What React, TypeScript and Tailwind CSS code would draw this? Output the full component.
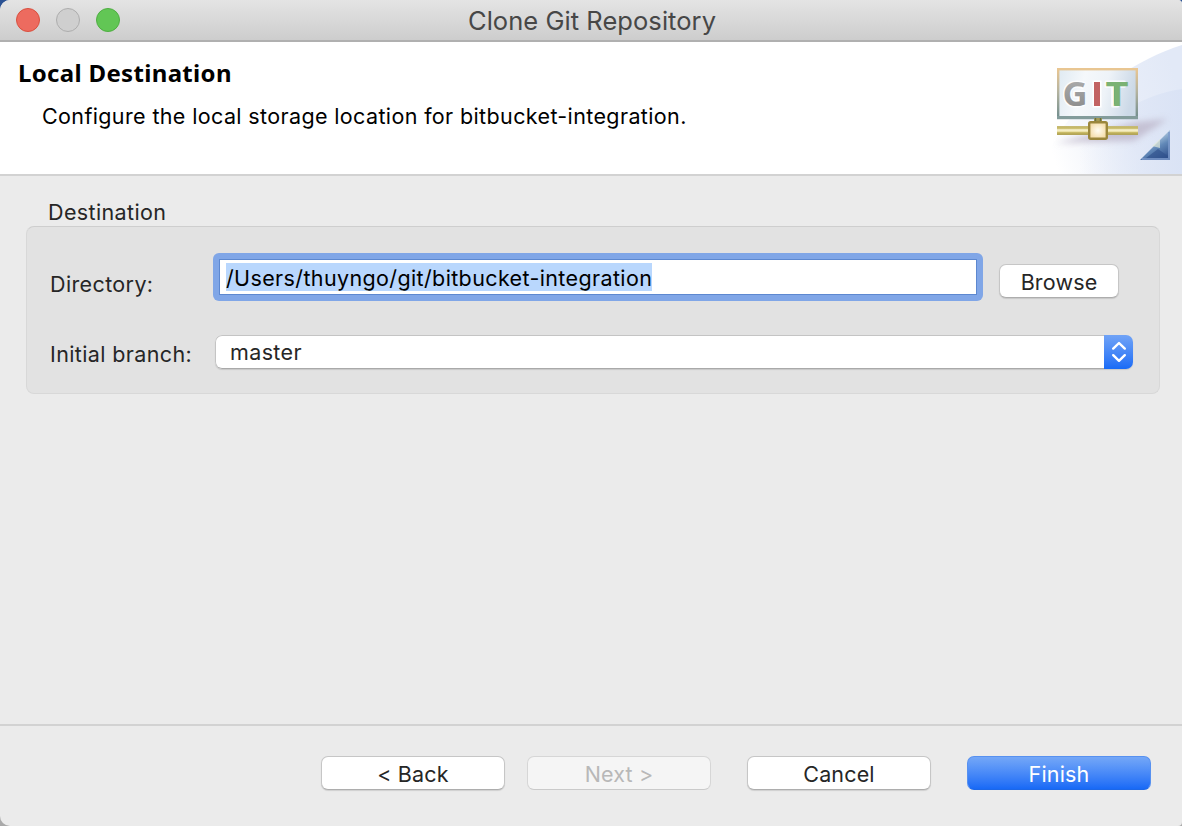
import type { ReactNode } from "react";

function TitleBar() {
  return (
    <header className="flex h-[42px] shrink-0 items-center justify-between border-b-2 border-[#b0b0b0] bg-linear-to-b from-[#e4e4e4] to-[#cdcdcd] px-4">
      <div className="flex w-[104px] gap-4">
        <span className="size-6 rounded-full border border-[#d8503f] bg-[#ed6b5f]" />
        <span className="size-6 rounded-full border border-[#adadad] bg-[#cfcfcf]" />
        <span className="size-6 rounded-full border border-[#4fae42] bg-[#62c655]" />
      </div>
      <h1 className="pt-[2px] pl-[2px] text-[25.5px] leading-none tracking-[0.05px] whitespace-nowrap text-[#474747]">Clone Git Repository</h1>
      <div className="w-[104px]" />
    </header>
  );
}

function GitBanner() {
  return (
    <svg className="h-[132px] w-[152px] shrink-0" viewBox="0 0 152 132" aria-hidden="true">
      <defs>
        <linearGradient id="sweep" x1="0" y1="0.7" x2="1" y2="0.4">
          <stop offset="0.05" stopColor="#e8edf8" stopOpacity="0" />
          <stop offset="0.6" stopColor="#e9eef9" />
          <stop offset="1" stopColor="#e2e9f7" />
        </linearGradient>
        <linearGradient id="sweepLow" x1="0" y1="0" x2="1" y2="0">
          <stop offset="0.15" stopColor="#dce4f5" stopOpacity="0" />
          <stop offset="1" stopColor="#dae3f5" />
        </linearGradient>
        <linearGradient id="frame" x1="0" y1="0" x2="0" y2="1">
          <stop offset="0" stopColor="#e9c692" />
          <stop offset="0.45" stopColor="#b6b4a0" />
          <stop offset="1" stopColor="#718d8d" />
        </linearGradient>
        <linearGradient id="screen" x1="0" y1="0" x2="1" y2="0.15">
          <stop offset="0" stopColor="#dfeaf2" />
          <stop offset="0.35" stopColor="#f5f8fb" />
          <stop offset="0.65" stopColor="#eef3f8" />
          <stop offset="1" stopColor="#ccd9e7" />
        </linearGradient>
        <linearGradient id="pipe" x1="0" y1="0" x2="0" y2="1">
          <stop offset="0" stopColor="#c5ba78" />
          <stop offset="0.25" stopColor="#c6b862" />
          <stop offset="0.42" stopColor="#f6f0cd" />
          <stop offset="0.58" stopColor="#f4ebb8" />
          <stop offset="0.75" stopColor="#c0b158" />
          <stop offset="1" stopColor="#aea158" />
        </linearGradient>
        <radialGradient id="node">
          <stop offset="0" stopColor="#fffdf3" />
          <stop offset="1" stopColor="#f5deac" />
        </radialGradient>
        <linearGradient id="corner" x1="0.2" y1="0" x2="0.75" y2="1">
          <stop offset="0.25" stopColor="#bdd5e7" />
          <stop offset="0.6" stopColor="#6289b8" />
          <stop offset="1" stopColor="#30518c" />
        </linearGradient>
        <linearGradient id="letterG" x1="0" y1="0" x2="0" y2="1">
          <stop offset="0" stopColor="#b5b5b5" />
          <stop offset="1" stopColor="#858585" />
        </linearGradient>
        <filter id="soft" x="-20%" y="-50%" width="140%" height="200%">
          <feGaussianBlur stdDeviation="3" />
        </filter>
      </defs>
      <path d="M152 3 C108 17 62 48 34 84 C24 100 14 116 8 132 H152Z" fill="url(#sweep)" />
      <path d="M152 47 C112 53 67 77 32 132 H152Z" fill="url(#sweepLow)" />
      <path d="M26 101 L106 80 L138 77 L104 99 Z" fill="#b9b1c5" opacity="0.7" filter="url(#soft)" />
      <rect x="28.2" y="27.2" width="78.6" height="48.8" fill="url(#screen)" stroke="url(#frame)" strokeWidth="2.4" />
      <path d="M27 75.4 H108" stroke="#839c9b" strokeWidth="3" />
      <g fontFamily="Noto Sans, sans-serif" fontWeight="700" fontSize="33.6">
        <g stroke="#fff" strokeWidth="3" strokeLinejoin="round" opacity="0.8">
          <text x="32.5" y="64">G</text>
          <text x="75.5" y="64">T</text>
        </g>
        <text x="32.5" y="64" textLength="25.5" lengthAdjust="spacingAndGlyphs" fill="url(#letterG)">G</text>
        <text x="75.5" y="64" textLength="23.5" lengthAdjust="spacingAndGlyphs" fill="#7bb273">T</text>
      </g>
      <rect x="62.5" y="38.5" width="9" height="27" fill="#fff" />
      <rect x="64" y="40" width="6" height="24" fill="#c26363" />
      <path d="M64 76 H72 V81 H64Z" fill="#a59b55" />
      <path d="M65.5 76 V80 M70.5 76 V80" stroke="#657046" strokeWidth="1.4" />
      <rect x="27" y="84" width="81" height="9" fill="url(#pipe)" />
      <rect x="59.2" y="80.2" width="17.6" height="16.6" rx="1.5" fill="url(#node)" stroke="#9b873c" strokeWidth="2.4" />
      <path d="M140 88 V118 H110 L124 104Z" fill="url(#corner)" />
      <path d="M116 116 L128 107 L138 114 V118 H111Z" fill="#30518c" opacity="0.65" />
      <path d="M122 104 L130 97 L130 106Z" fill="#e2e9d8" opacity="0.7" />
      <path d="M139 90 V117 H112" fill="none" stroke="#7d9bcc" strokeWidth="2" opacity="0.8" />
    </svg>
  );
}

function PushButton({ children, className }: { children: ReactNode; className: string }) {
  return (
    <button className={`flex h-[34px] shrink-0 items-center justify-center rounded-[7px] border pt-[4px] text-[21.5px] leading-none tracking-[0.15px] ${className}`}>
      {children}
    </button>
  );
}

const plain = "border-[#c6c6c6] border-b-[#adadad] bg-white text-[#262626] shadow-[0_1px_1px_rgba(0,0,0,0.12)]";

export default function App() {
  return (
    <div className="h-[826px] w-[1182px] bg-linear-to-b from-[#2b5293] from-10% to-[#a9a9a9] to-50%">
      <main className="flex h-full flex-col overflow-hidden rounded-tl-[10px] rounded-tr-[4px] rounded-br-[4px] rounded-bl-[10px] bg-[#ebebeb] font-['Inter',sans-serif] text-[21.5px] leading-[26px] tracking-[0.37px] text-[#262626]">
        <TitleBar />
        <section className="flex h-[134px] shrink-0 justify-between border-b-2 border-[#d2d2d2] bg-white text-black">
          <div className="pt-[14px] pl-[18px]">
            <h2 className="font-['Noto_Sans',sans-serif] text-[24px] leading-[34px] font-bold tracking-[0.33px] whitespace-nowrap">Local Destination</h2>
            <p className="mt-[13px] pl-6 whitespace-nowrap">Configure the local storage location for bitbucket-integration.</p>
          </div>
          <GitBanner />
        </section>
        <section className="flex-1 px-[26px] pr-[22px] pt-[23px]">
          <h3 className="h-[27px] pl-[22px]">Destination</h3>
          <div className="h-[168px] rounded-[8px] border border-[#d8d8d8] border-t-[#cecece] bg-[#e2e2e2] pt-[26px] pl-[23px]">
            <div className="flex h-[48px]">
              <label className="w-[163px] pt-[18px]">Directory:</label>
              <div className="h-[48px] w-[770px] rounded-[6px] bg-[#80a6e7] p-[6px]">
                <div className="flex h-full items-center border border-[#5d88d0] bg-white pl-[6px] text-black">
                  <span className="flex h-7 items-center bg-[#b9d7fd] pt-[2px] whitespace-nowrap">/Users/thuyngo/git/bitbucket-integration</span>
                </div>
              </div>
              <PushButton className={`mt-[11px] ml-4 w-[120px] ${plain}`}>Browse</PushButton>
            </div>
            <div className="mt-[34px] flex h-[34px]">
              <label className="w-[165px] shrink-0 pt-[6px] whitespace-nowrap">Initial branch:</label>
              <div className="flex h-[34px] w-[918px] overflow-hidden rounded-[7px] shadow-[0_1px_1px_rgba(0,0,0,0.12)]">
                <div className="flex flex-1 items-center rounded-l-[7px] border border-r-0 border-[#c4c4c4] border-b-[#a9a9a9] bg-white pl-[14px]">
                  master
                </div>
                <div className="flex w-[29px] items-center justify-center bg-linear-to-b from-[#70a3f6] to-[#186bf6]">
                  <svg width="16" height="22" viewBox="0 0 16 22" fill="none" stroke="white" strokeWidth="2.4" strokeLinecap="round" strokeLinejoin="round">
                    <path d="M2.2 7.6 L8 2 L13.8 7.6 M2.2 14.2 L8 19.8 L13.8 14.2" />
                  </svg>
                </div>
              </div>
            </div>
          </div>
        </section>
        <footer className="flex h-[102px] shrink-0 border-t-2 border-[#d2d2d2] pt-[30px] pl-[321px]">
          <PushButton className={`w-[184px] ${plain}`}>&lt; Back</PushButton>
          <PushButton className="ml-[22px] w-[184px] border-[#d6d6d6] border-b-[#cacaca] bg-[#f5f5f5] text-[#b8b8b8]">Next &gt;</PushButton>
          <PushButton className={`ml-9 w-[184px] ${plain}`}>Cancel</PushButton>
          <PushButton className="ml-9 w-[184px] border-[#5791f0] border-b-[#1c67e8] bg-linear-to-b from-[#74a7f7] to-[#1769f6] text-white">Finish</PushButton>
        </footer>
      </main>
    </div>
  );
}
